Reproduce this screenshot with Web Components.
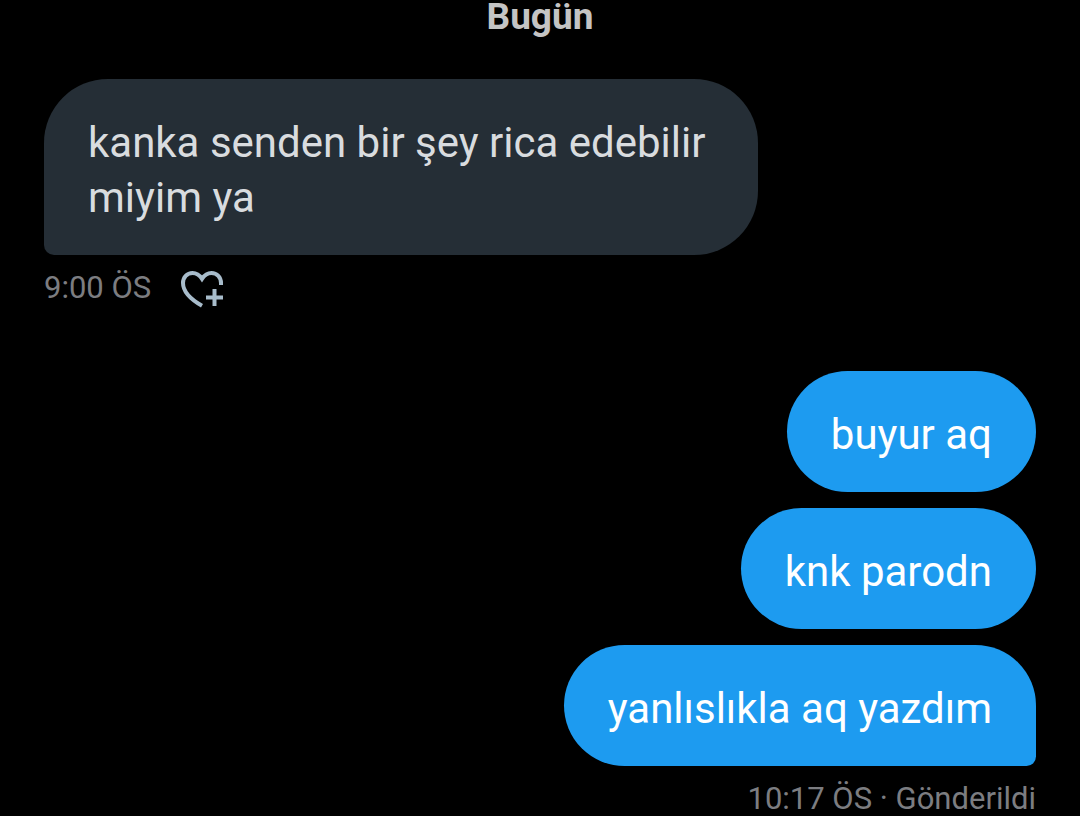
<!DOCTYPE html>
<html lang="tr"><head><meta charset="utf-8"><title>Mesajlar</title>
<style>html,body{margin:0;background:#000;min-height:100%}</style></head><body>
<chat-thread>
<day-label>Bugün</day-label>
<message-group>
<message-bubble tail>kanka senden bir şey rica edebilir miyim ya</message-bubble>
<message-meta slot="meta">9:00 ÖS<heart-button slot="action"></heart-button></message-meta>
</message-group>
<message-group sent>
<message-bubble sent>buyur aq</message-bubble>
<message-bubble sent>knk parodn</message-bubble>
<message-bubble sent tail>yanlıslıkla aq yazdım</message-bubble>
<message-meta slot="meta">10:17 ÖS · Gönderildi</message-meta>
</message-group>
</chat-thread>
<script>
const define=(name,html)=>customElements.define(name,class extends HTMLElement{
constructor(){super();const t=document.createElement('template');t.innerHTML=html;this.attachShadow({mode:'open'}).append(t.content.cloneNode(true));}
});
define('chat-thread',`<style>:host{display:block;box-sizing:border-box;padding:0 44px;font:42px/55px Roboto,sans-serif;background:#000}main{display:flex;flex-direction:column}</style><main><slot></slot></main>`);
define('day-label',`<style>:host{display:block;text-align:center;margin-bottom:46px;color:#c4c4c4}h2{margin:0;font:700 37px/33px Roboto,sans-serif}</style><h2><slot></slot></h2>`);
define('message-group',`<style>:host{display:flex;flex-direction:column;align-items:flex-start;gap:16px;margin-bottom:63px}:host([sent]){align-items:flex-end;margin-bottom:0}</style><slot></slot><slot name="meta"></slot>`);
define('message-bubble',`<style>:host{display:block;box-sizing:border-box;max-width:72%;padding:36px 44px 30px;border-radius:64px;background:#252e36;color:#d9dcdf}:host([tail]){border-bottom-left-radius:10px}:host([sent]){background:#1d9bf0;color:#fff}:host([sent][tail]){border-bottom-left-radius:64px;border-bottom-right-radius:10px}p{margin:0}</style><p><slot></slot></p>`);
define('message-meta',`<style>:host{display:flex;align-items:flex-start;gap:30px;font-size:31px;line-height:34px;color:#7c7d81}</style><span><slot></slot></span><slot name="action"></slot>`);
define('heart-button',`<style>:host{display:block}button{display:block;padding:0;border:0;background:none;color:#a8bccb}svg{display:block}</style><button type="button" aria-label="Tepki ekle"><svg width="42" height="37" viewBox="0 0 42 37" fill="none" stroke="currentColor" stroke-width="4"><path d="M21 34.8C10 28.5 2 20.5 2 12C2 6.5 6 2 11.5 2C15.5 2 18.5 4 21 7.8C23.5 4 26.5 2 30.5 2C36 2 40 6.5 40 12V14M33.5 18V35M25 26.5H42"/></svg></button>`);
</script></body></html>
